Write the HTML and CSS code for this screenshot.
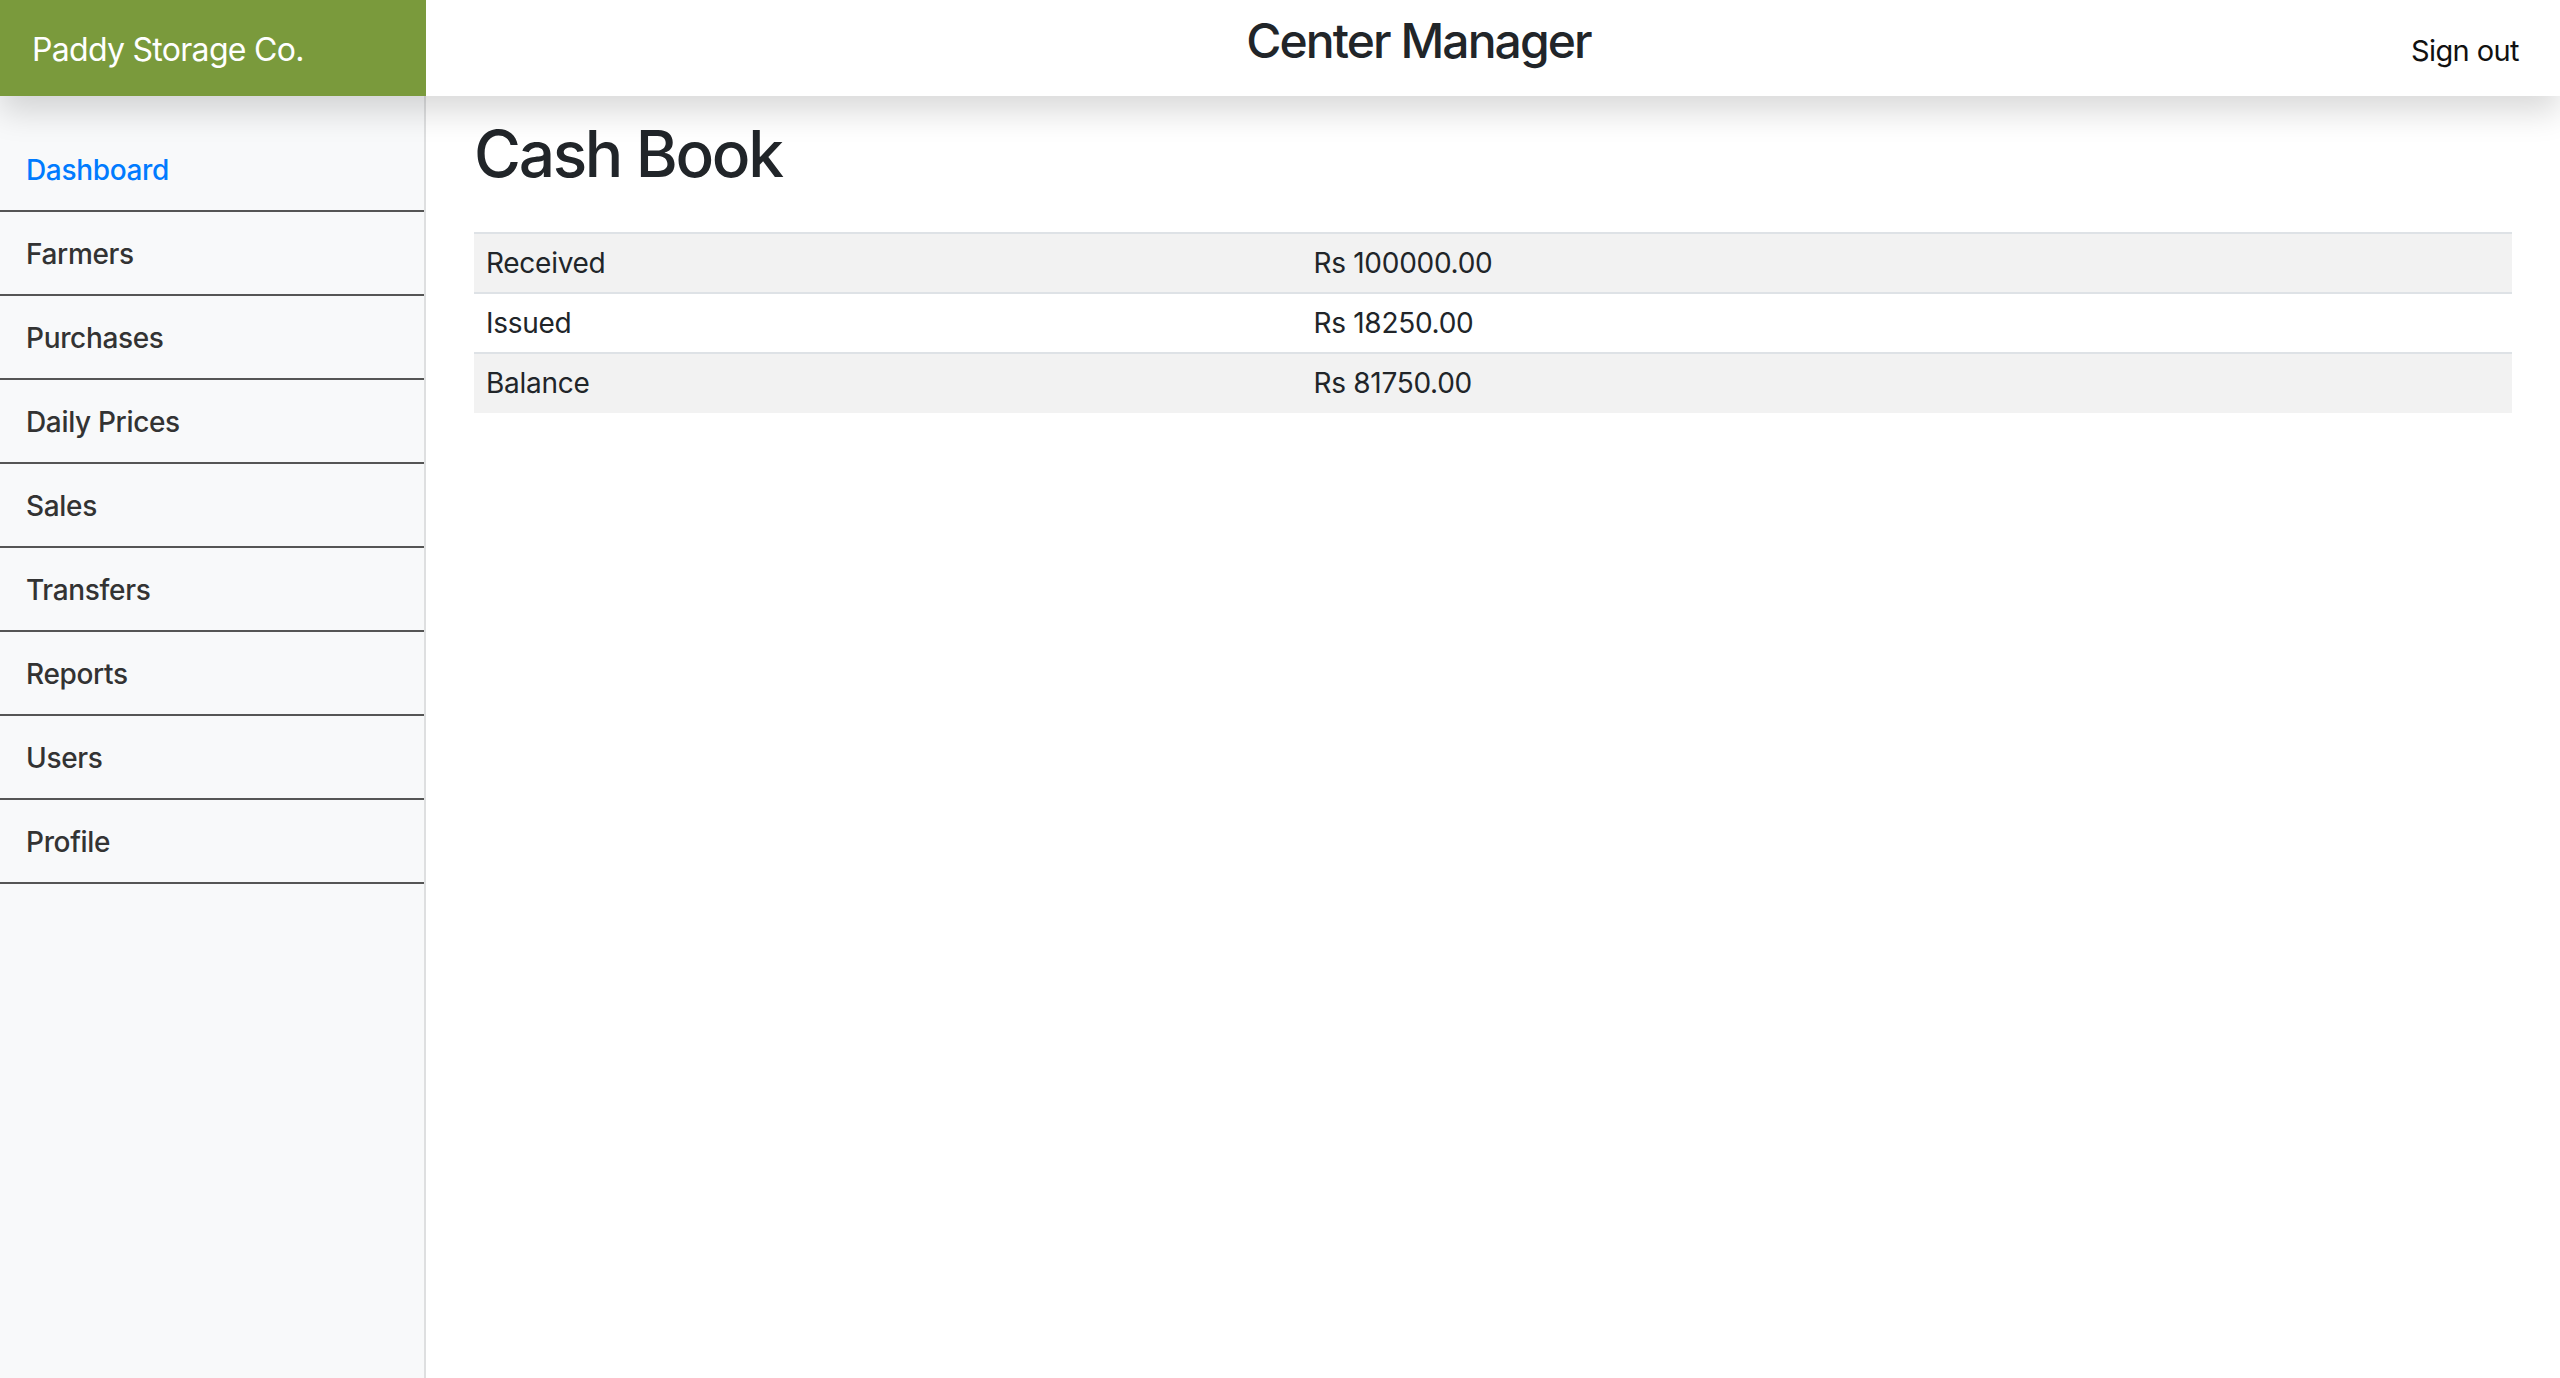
FILE: index.html
```html
<!DOCTYPE html>
<html lang="en">
<head>
<meta charset="utf-8">
<title>Cash Book</title>
<link rel="stylesheet" href="styles.css">
</head>
<body>
<header class="topbar">
  <a class="brand" href="#">Paddy Storage Co.</a>
  <h3 class="page-role">Center Manager</h3>
  <a class="signout" href="#">Sign out</a>
</header>
<div class="layout">
  <nav class="sidebar">
    <ul class="nav">
      <li><a class="nav-link active" href="#">Dashboard</a></li>
      <li><a class="nav-link" href="#">Farmers</a></li>
      <li><a class="nav-link" href="#">Purchases</a></li>
      <li><a class="nav-link" href="#">Daily Prices</a></li>
      <li><a class="nav-link" href="#">Sales</a></li>
      <li><a class="nav-link" href="#">Transfers</a></li>
      <li><a class="nav-link" href="#">Reports</a></li>
      <li><a class="nav-link" href="#">Users</a></li>
      <li><a class="nav-link" href="#">Profile</a></li>
    </ul>
  </nav>
  <main class="main">
    <h1 class="title">Cash Book</h1>
    <table class="cash-table">
      <tbody>
        <tr><td class="label">Received</td><td>Rs 100000.00</td></tr>
        <tr><td class="label">Issued</td><td>Rs 18250.00</td></tr>
        <tr><td class="label">Balance</td><td>Rs 81750.00</td></tr>
      </tbody>
    </table>
  </main>
</div>
</body>
</html>
```

FILE: styles.css
```css
* { box-sizing: border-box; }
html, body { margin: 0; padding: 0; height: 100%; }
body {
  font-family: Inter, "Helvetica Neue", Arial, sans-serif;
  color: #212529;
  background: #fff;
  display: flex;
  flex-direction: column;
  min-height: 100vh;
}
a { text-decoration: none; }

.topbar {
  height: 96px;
  display: flex;
  align-items: center;
  background: #fff;
  box-shadow: 0 16px 32px rgba(0, 0, 0, 0.15);
  position: relative;
  z-index: 2;
  flex: 0 0 auto;
}
.brand {
  width: 426px;
  height: 96px;
  flex: 0 0 426px;
  background: #7a9a3c;
  color: #fff;
  font-size: 32px;
  letter-spacing: -0.022em;
  line-height: 96px;
  padding-left: 32px;
  padding-top: 2px;
}
.page-role {
  flex: 1 1 auto;
  margin: 0 0 14px 0;
  text-align: center;
  font-size: 48px;
  font-weight: 500;
  letter-spacing: -0.04em;
  line-height: 1.2;
  color: #212529;
}
.signout {
  flex: 0 0 auto;
  color: #111;
  font-size: 29px;
  letter-spacing: -0.02em;
  padding-right: 41px;
  padding-top: 4px;
}

.layout {
  flex: 1 1 auto;
  display: flex;
}
.sidebar {
  width: 426px;
  flex: 0 0 426px;
  background: #f8f9fa;
  box-shadow: inset -2px 0 0 rgba(0, 0, 0, 0.1);
  padding-top: 32px;
}
.nav {
  list-style: none;
  margin: 0;
  padding: 0;
  padding-right: 2px;
}
.nav li {
  border-bottom: 2px solid #555;
}
.nav-link {
  display: block;
  height: 82px;
  line-height: 84px;
  padding-left: 26px;
  font-size: 28px;
  font-weight: 500;
  letter-spacing: -0.012em;
  color: #333;
}
.nav-link.active { color: #007bff; }

.main {
  flex: 1 1 auto;
  padding: 20px 48px 0 48px;
}
.title {
  margin: 0 0 39px 0;
  font-size: 64px;
  font-weight: 500;
  letter-spacing: -0.036em;
  line-height: 1.2;
  color: #212529;
}
.cash-table {
  width: 100%;
  border-collapse: collapse;
  font-size: 28px;
  letter-spacing: -0.01em;
  color: #212529;
}
.cash-table td {
  border-top: 2px solid #dee2e6;
  padding: 8px 12px;
  line-height: 42px;
  height: 60px;
}
.cash-table td.label { width: 40.6%; }
.cash-table tr:nth-child(odd) td { background: #f2f2f2; }
```
